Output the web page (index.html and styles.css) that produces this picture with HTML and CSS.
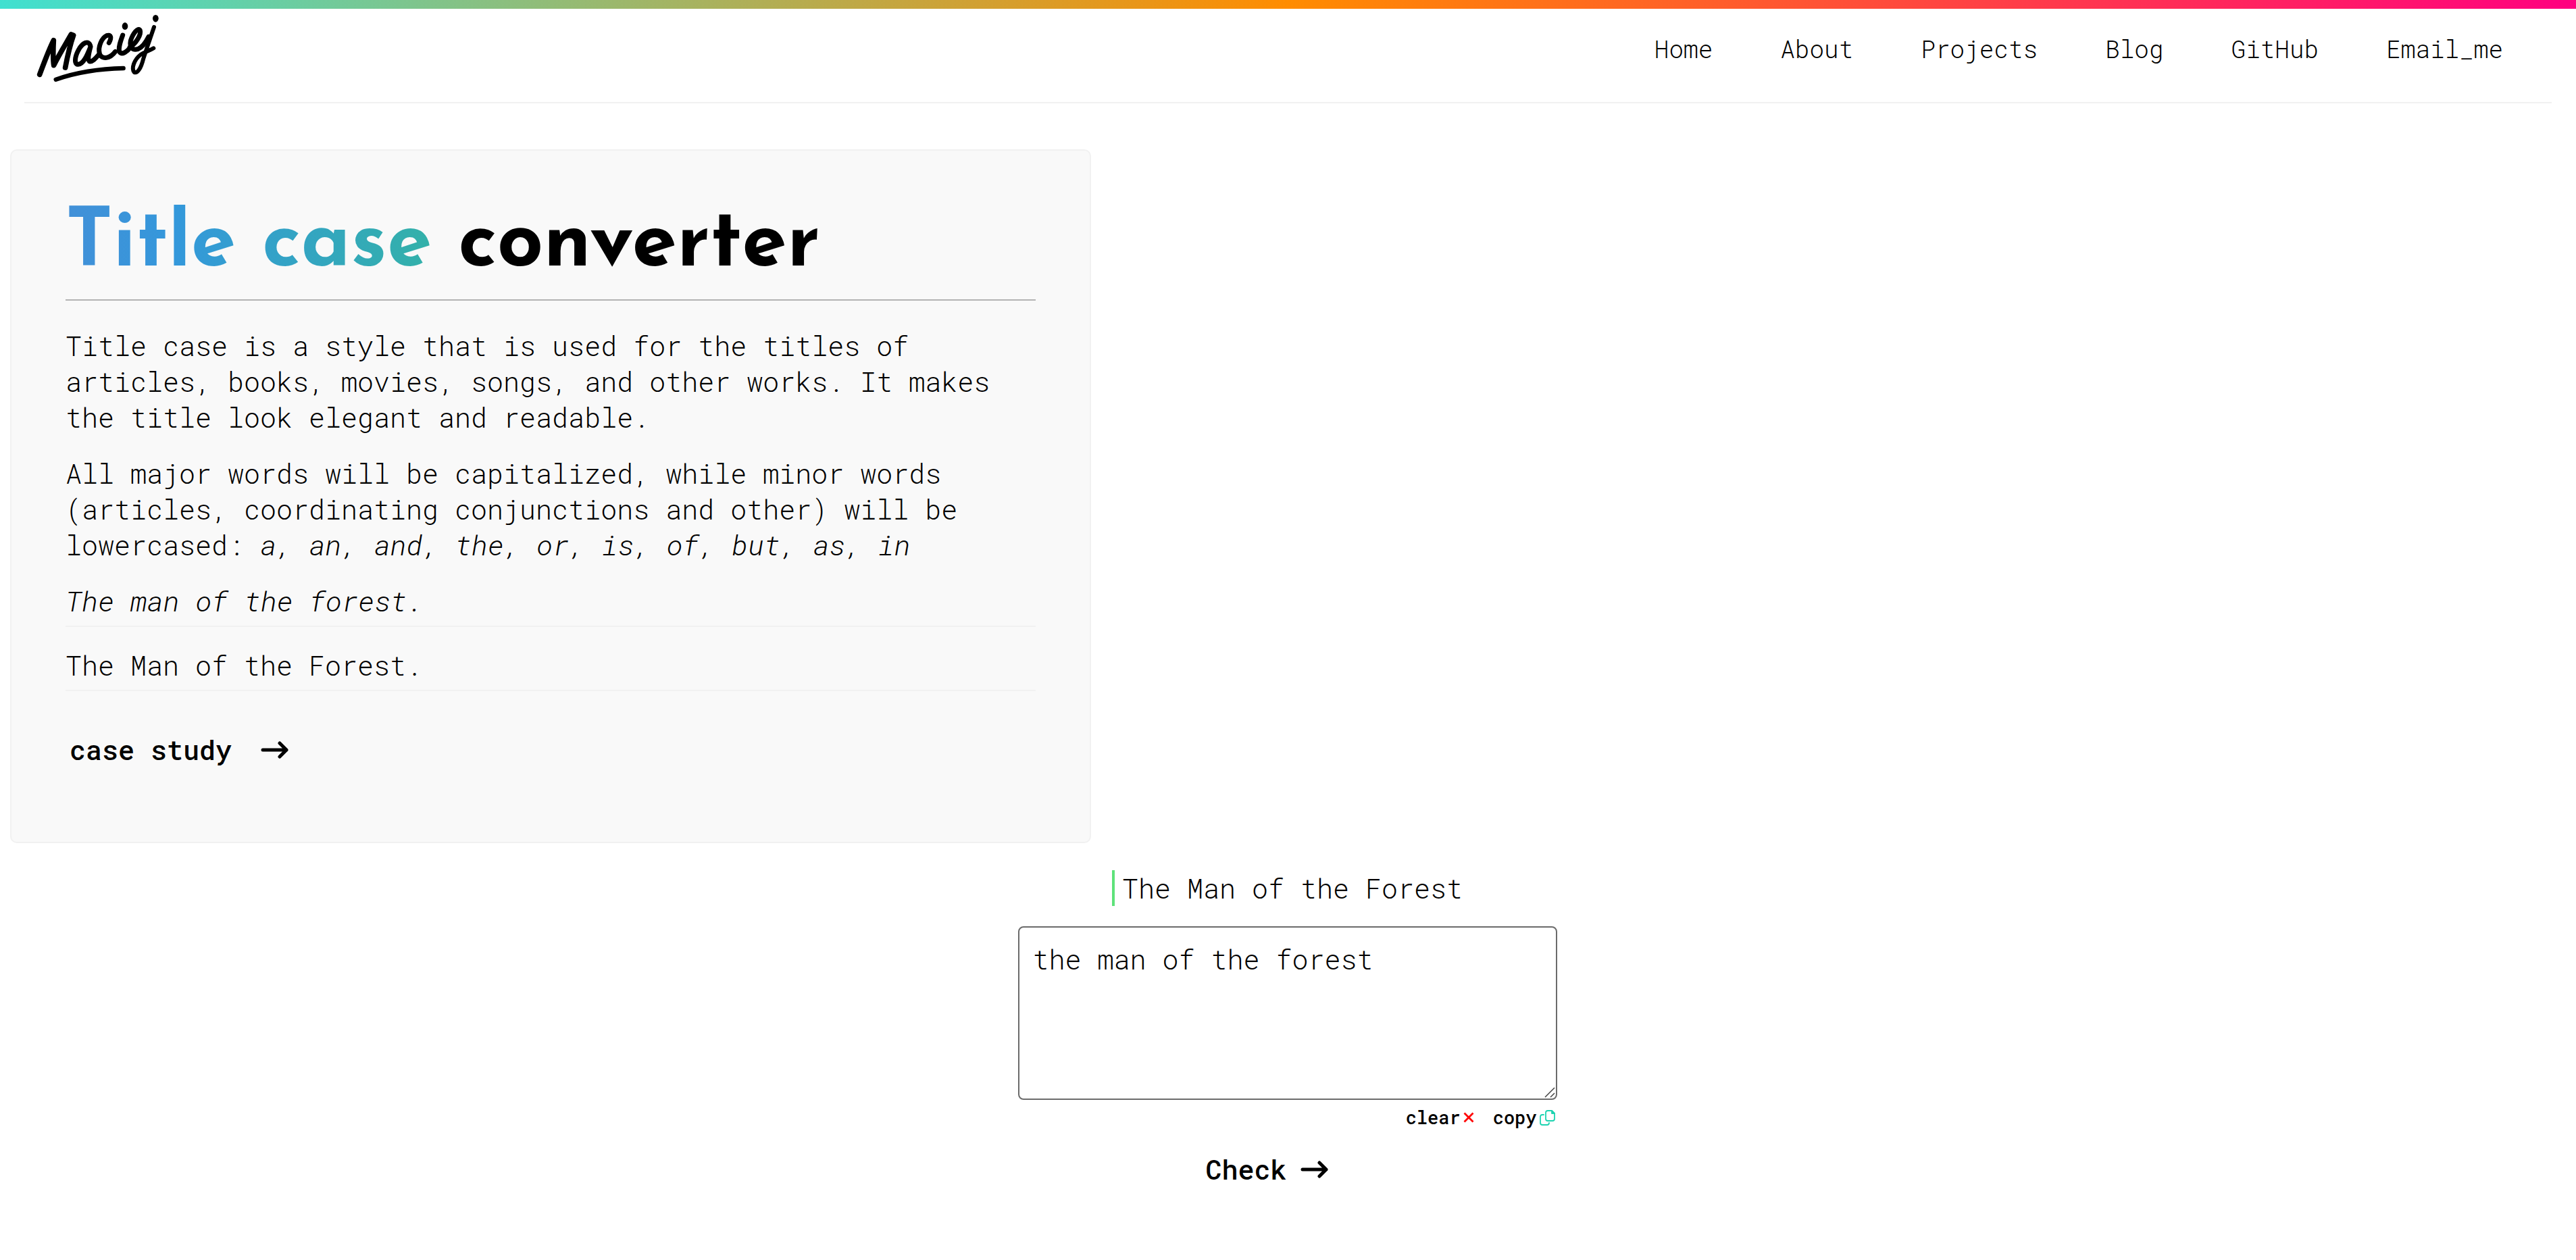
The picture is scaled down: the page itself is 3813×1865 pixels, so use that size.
FILE: index.html
```html
<!DOCTYPE html>
<html lang="en">
<head>
<meta charset="utf-8">
<title>Title case converter</title>
<link rel="stylesheet" href="styles.css">
</head>
<body>
<div class="rainbow"></div>
<header class="header">
  <a class="logo" href="#" aria-label="Maciej">
    <svg class="logo-art" viewBox="162 60 549 303" fill="none" stroke="#000" stroke-width="21" stroke-linecap="round" stroke-linejoin="round">
      <path d="M176 328C194 280 215 222 238 176C236 215 235 260 239 287C262 240 292 192 316 150L326 154C310 200 298 255 290 297" stroke-width="23"/>
      <path d="M402 203C395 172 366 186 348 220C332 250 328 283 347 283C372 280 388 240 402 205C394 235 388 260 397 269C410 274 425 255 440 238"/>
      <path d="M484 187C496 165 494 148 474 155C452 165 434 205 442 235C452 265 490 256 512 226"/>
      <path d="M545 153C535 180 524 210 531 228C542 243 566 225 580 206"/>
      <path d="M577 206C604 190 628 150 622 132C614 116 590 145 580 178C574 208 590 222 612 215C636 206 650 180 660 160"/>
      <path d="M684 117C668 165 650 215 636 260C626 300 610 324 596 318C582 300 596 262 624 240C645 226 665 222 682 211" stroke-width="18"/>
      <path d="M248 350C340 318 450 302 548 300" stroke-width="19"/>
      <ellipse cx="555" cy="113" rx="13" ry="16" fill="#000" stroke="none"/>
      <ellipse cx="691" cy="79" rx="13" ry="16" fill="#000" stroke="none"/>
    </svg>
  </a>
  <nav class="nav">
    <a href="#">Home</a>
    <a href="#">About</a>
    <a href="#">Projects</a>
    <a href="#">Blog</a>
    <a href="#">GitHub</a>
    <a href="#">Email_me</a>
  </nav>
</header>
<main>
  <section class="card">
    <h1 class="title"><span class="title-accent">Title case</span> converter</h1>
    <p class="text">Title case is a style that is used for the titles of articles, books, movies, songs, and other works. It makes the title look elegant and readable.</p>
    <p class="text">All major words will be capitalized, while minor words (articles, coordinating conjunctions and other) will be lowercased: <em>a, an, and, the, or, is, of, but, as, in</em></p>
    <p class="example"><em>The man of the forest.</em></p>
    <p class="example">The Man of the Forest.</p>
    <a class="action case-link" href="#">case study
      <svg class="arrow" viewBox="0 0 42 26" fill="none" stroke="#000" stroke-width="5" stroke-linecap="round" stroke-linejoin="round"><path d="M4 13H39M29 3L39 13L29 23"/></svg>
    </a>
  </section>
  <form class="converter">
    <output class="result" for="source">The Man of the Forest</output>
    <div class="field">
      <textarea class="source" id="source" aria-label="Text to convert">the man of the forest</textarea>
      <svg class="grip" viewBox="0 0 16 16" fill="none" stroke="#444" stroke-width="1.5"><path d="M1 15L15 1M9 15L15 9"/></svg>
    </div>
    <div class="tools">
      <button class="tool" type="button">clear<svg class="icon-clear" viewBox="0 0 16 16" fill="none" stroke="#f00" stroke-width="2.8"><path d="M1.500 1.500L14.500 14.500M14.500 1.500L1.500 14.500"/></svg></button>
      <button class="tool" type="button">copy<svg class="icon-copy" viewBox="0 0 24 24" fill="none" stroke="#1dd3b0" stroke-width="1.8" stroke-linejoin="round" stroke-linecap="round"><path d="M12 2H18L22 6V14Q22 17 19 17H12Q9 17 9 14V5Q9 2 12 2Z"/><path d="M18 2V6H22Z" fill="#1dd3b0"/><path d="M6 8H4Q1 8 1 11V20Q1 23 4 23H11Q14 23 14 20"/></svg></button>
    </div>
    <button class="action check" type="button">Check
      <svg class="arrow" viewBox="0 0 42 26" fill="none" stroke="#000" stroke-width="5" stroke-linecap="round" stroke-linejoin="round"><path d="M3 13H38M28 3L38 13L28 23"/></svg>
    </button>
  </form>
</main>
</body>
</html>
```
FILE: styles.css
```css
* { box-sizing: border-box; }

body {
  margin: 0;
  background: #fff;
  color: #000;
  font-family: "Roboto Mono", "DejaVu Sans Mono", "Liberation Mono", monospace;
  font-size: 40px;
  font-weight: 350;
  line-height: 53px;
}

a { color: inherit; text-decoration: none; }
svg { display: block; }
em { font-size: 41px; line-height: 40px; }

.rainbow {
  height: 13px;
  background: linear-gradient(to right, #40e0d0, #ff8c00, #ff0080);
}

.header {
  display: flex;
  justify-content: space-between;
  align-items: flex-start;
  height: 140px;
  margin: 0 36px;
  padding: 8px 72px 0 18px;
  border-bottom: 2px solid #f1f1f1;
}

.logo-art { width: 183px; height: 101px; }

.nav {
  display: flex;
  gap: 100px;
  padding-top: 27px;
  font-size: 36px;
  line-height: 48px;
}

.card {
  width: 1600px;
  max-width: calc(100% - 30px);
  margin: 68px 15px 0;
  padding: 76px 80px 110px;
  background: #f9f9f9;
  border: 2px solid #f1f1f1;
  border-radius: 10px;
}

.title {
  margin: 0 0 40px;
  padding-bottom: 16px;
  border-bottom: 2px solid #b3b3b3;
  font-family: "Josefin Sans", Lato, sans-serif;
  font-size: 120px;
  font-weight: 700;
  line-height: 128px;
}

.title-accent {
  color: transparent;
  background: linear-gradient(to right, #4290d8, #3498db 30%, #33b1a9);
  -webkit-background-clip: text;
  background-clip: text;
}

.text { margin: 0 0 30px; }

.example {
  margin: 0 0 30px;
  padding-bottom: 10px;
  border-bottom: 2px solid #f1f1f1;
}

.action {
  display: flex;
  align-items: center;
  font-weight: 500;
}

.arrow { width: 42px; height: 26px; }

.case-link {
  gap: 42px;
  width: max-content;
  margin-top: 60px;
  padding-left: 6px;
}

.converter {
  display: flex;
  flex-direction: column;
  align-items: center;
  margin-top: 40px;
  padding-right: 2px;
}

.result {
  padding-left: 11px;
  border-left: 4px solid #5ee27a;
}

.field {
  position: relative;
  width: 798px;
  max-width: 100%;
  margin: 30px 0 10px;
}

.source {
  display: block;
  width: 100%;
  height: 257px;
  padding: 20px;
  border: 2px solid #6b6b6b;
  border-radius: 8px;
  background: #fff;
  color: inherit;
  font: inherit;
  resize: none;
}

.grip {
  position: absolute;
  right: 3px;
  bottom: 3px;
  width: 16px;
  height: 16px;
}

button {
  padding: 0;
  border: 0;
  background: none;
  color: inherit;
  font: inherit;
}

.tools {
  display: flex;
  justify-content: flex-end;
  gap: 28px;
  width: 798px;
  max-width: 100%;
  padding-right: 2px;
}

.tool {
  display: flex;
  align-items: center;
  gap: 4px;
  font-size: 27px;
  font-weight: 500;
  line-height: 32px;
}

.icon-clear { width: 16px; height: 16px; }
.icon-copy { width: 24px; height: 24px; }

.check {
  gap: 20px;
  margin-top: 34px;
  padding-right: 60px;
  font-weight: 500;
}
```
